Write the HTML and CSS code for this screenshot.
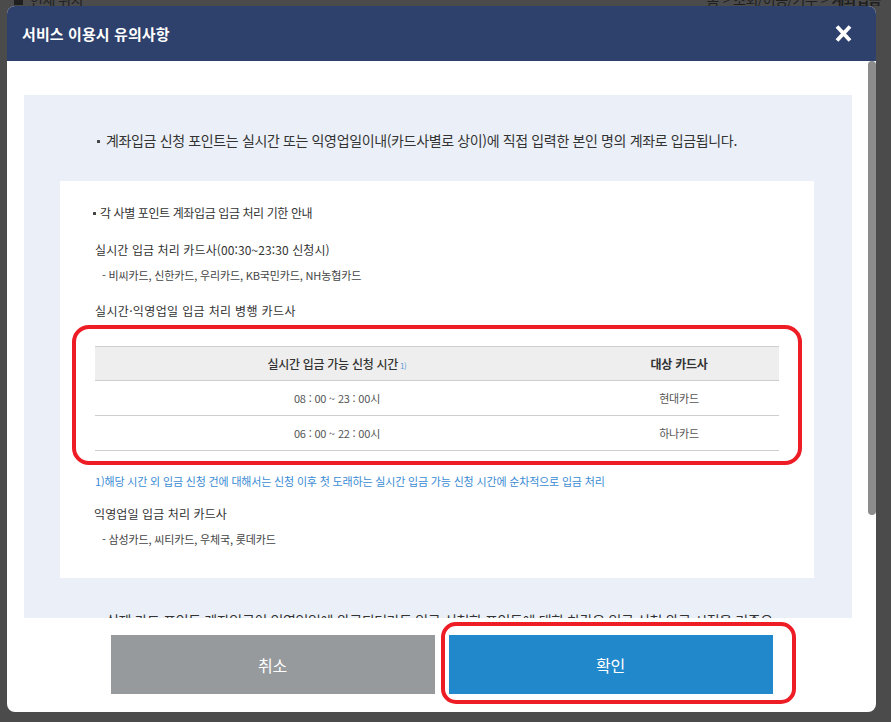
FILE: index.html
```html
<!DOCTYPE html>
<html lang="ko">
<head>
<meta charset="utf-8">
<title>서비스 이용시 유의사항</title>
<link rel="stylesheet" href="styles.css">
</head>
<body>
<div class="behind">
  <div class="behind-row">
    <span class="loc"><svg class="home" width="13" height="12" viewBox="0 0 13 12"><path d="M6.5 0 L13 6 L11 6 L11 12 L2 12 L2 6 L0 6 Z" fill="#1f1f1f"/></svg>현재 위치</span>
    <span class="crumb">홈 &gt; 조회/이용/기부 &gt; <b>계좌입금</b></span>
  </div>
</div>

<div class="modal">
  <div class="modal-head">
    <h1 class="modal-title">서비스 이용시 유의사항</h1>
    <button class="close" type="button" aria-label="닫기">
      <svg width="17" height="17" viewBox="0 0 17 17"><path d="M2 1.5 L15 15.5 M15 1.5 L2 15.5" stroke="#fff" stroke-width="3.8" fill="none"/></svg>
    </button>
  </div>

  <div class="modal-body">
    <div class="scroll-view">
      <div class="notice">
        <p class="bullet top-text">계좌입금 신청 포인트는 실시간 또는 익영업일이내(카드사별로 상이)에 직접 입력한 본인 명의 계좌로 입금됩니다.</p>

        <div class="panel">
          <p class="bullet panel-head">각 사별 포인트 계좌입금 입금 처리 기한 안내</p>
          <p class="label l1">실시간 입금 처리 카드사(00:30~23:30 신청시)</p>
          <p class="sub">- 비씨카드, 신한카드, 우리카드, KB국민카드, NH농협카드</p>
          <p class="label l2">실시간·익영업일 입금 처리 병행 카드사</p>

          <div class="table-wrap">
            <table class="time-table">
              <colgroup><col class="c1"><col class="c2"></colgroup>
              <thead>
                <tr><th class="th1">실시간 입금 가능 신청 시간<sup>1)</sup></th><th class="th2">대상 카드사</th></tr>
              </thead>
              <tbody>
                <tr><td>08 : 00 ~ 23 : 00시</td><td>현대카드</td></tr>
                <tr><td>06 : 00 ~ 22 : 00시</td><td>하나카드</td></tr>
              </tbody>
            </table>
            <span class="mark mark-table"></span>
          </div>

          <p class="footnote">1)해당 시간 외 입금 신청 건에 대해서는 신청 이후 첫 도래하는 실시간 입금 가능 신청 시간에 순차적으로 입금 처리</p>
          <p class="label l3">익영업일 입금 처리 카드사</p>
          <p class="sub">- 삼성카드, 씨티카드, 우체국, 롯데카드</p>
        </div>

        <p class="bullet next-text">실제 카드 포인트 계좌입금이 익영업일에 완료되더라도 입금 신청한 포인트에 대한 차감은 입금 신청 완료 시점을 기준으로 합니다.</p>
        <p class="bullet last-text">계좌입금 신청 완료 후에는 신청 취소가 불가합니다.</p>
      </div>
    </div>
    <div class="scrollbar"><div class="scroll-thumb"></div></div>
  </div>

  <div class="modal-foot">
    <button class="btn btn-cancel" type="button">취소</button>
    <div class="confirm-wrap">
      <button class="btn btn-ok" type="button">확인</button>
      <span class="mark mark-btn"></span>
    </div>
  </div>
</div>
</body>
</html>
```

FILE: styles.css
```css
* { box-sizing: border-box; }

html, body {
  margin: 0;
  padding: 0;
}

body {
  width: 891px;
  height: 722px;
  overflow: hidden;
  background: #4b4b4b;
  font-family: "Noto Sans CJK KR", "Noto Sans", sans-serif;
  color: #333;
}

p { margin: 0; }

/* page behind the dimmed overlay */
.behind {
  height: 6px;
  overflow: hidden;
}

.behind-row {
  display: flex;
  justify-content: space-between;
  margin-top: -9px;
  height: 16px;
  line-height: 16px;
  font-size: 14px;
  color: #1f1f1f;
  padding: 0 10px 0 12px;
  letter-spacing: -0.5px;
}

.loc {
  display: flex;
  align-items: center;
  gap: 5px;
}

.crumb b { font-weight: 700; }

/* modal */
.modal {
  position: fixed;
  top: 6px;
  left: 7px;
  width: 869px;
  height: 706px;
  background: #fff;
  border-radius: 8px;
  overflow: hidden;
  display: flex;
  flex-direction: column;
}

.modal-head {
  flex: 0 0 55px;
  background: #2e416c;
  display: flex;
  align-items: center;
  justify-content: space-between;
  padding: 0 24px 0 15px;
}

.modal-title {
  margin: 0;
  font-size: 15px;
  font-weight: 700;
  color: #fff;
  letter-spacing: 0.1px;
  line-height: 20px;
}

.close {
  border: 0;
  padding: 0;
  margin: 0;
  background: transparent;
  width: 17px;
  height: 17px;
  display: flex;
}

.modal-body {
  flex: 1 1 auto;
  min-height: 0;
  display: flex;
}

.scroll-view {
  flex: 1 1 auto;
  min-width: 0;
  overflow: hidden;
  padding: 34px 16px 0 17px;
}

.scrollbar {
  flex: 0 0 8px;
  background: #fff;
}

.scroll-thumb {
  height: 454px;
  background: #8c8c8c;
  border-radius: 4px;
}

.notice {
  background: #ebf0f8;
  padding: 35px 38px 35px 36px;
}

.bullet::before {
  content: "";
  display: inline-block;
  width: 3px;
  height: 3px;
  background: #444;
  border-radius: 0.5px;
  vertical-align: middle;
  margin-right: 6px;
  position: relative;
  top: -1px;
}

.top-text,
.next-text,
.last-text {
  margin: 0 37px;
  font-size: 14px;
  line-height: 20px;
  letter-spacing: -0.36px;
  color: #333;
}

.top-text { margin-bottom: 31px; }
.next-text { margin-top: 32px; }
.last-text { margin-top: 10px; }

.panel {
  background: #fff;
  padding: 23px 35px 31px 33px;
}

.panel-head,
.label {
  font-size: 12px;
  line-height: 18px;
  letter-spacing: 0.1px;
  color: #333;
}

.panel-head { letter-spacing: -0.4px; }
.panel-head::before { margin-right: 4px; }

.label { margin-left: 2px; }
.l1 { margin-top: 19px; }
.l2 { margin-top: 19px; letter-spacing: 0.35px; }
.l3 { margin-top: 16px; margin-left: 1px; }

.sub {
  margin-top: 8px;
  padding-left: 9px;
  font-size: 11px;
  line-height: 16px;
  letter-spacing: -0.15px;
  color: #444;
}

.table-wrap {
  position: relative;
  margin: 26px 0 0 2px;
}

.time-table {
  width: 684px;
  border-collapse: separate;
  border-spacing: 0;
  table-layout: fixed;
}

.c1 { width: 484px; }
.c2 { width: 200px; }

.time-table th,
.time-table td {
  padding: 0;
  line-height: 34px;
  text-align: center;
  border-bottom: 1px solid #cfcfcf;
}

.time-table th {
  background: #eeeeee;
  border-top: 1px solid #cfcfcf;
  line-height: 33px;
  font-size: 12px;
  color: #333;
  letter-spacing: -0.3px;
}

.th1 { font-weight: 500; }
.th2 { font-weight: 700; }

.time-table sup {
  font-size: 8px;
  line-height: 0;
  color: #5b9ad6;
  font-weight: 400;
  vertical-align: 0;
  margin-left: 2px;
}

.time-table td {
  font-size: 11px;
  color: #555;
  letter-spacing: -0.2px;
}

.footnote {
  margin: 22px 0 0 2px;
  font-size: 11px;
  line-height: 16px;
  letter-spacing: -0.17px;
  color: #3a8bd4;
}

/* red annotation outlines */
.mark {
  position: absolute;
  border: 4px solid #ee1c25;
  border-radius: 17px;
  pointer-events: none;
}

.mark-table {
  left: -23px;
  right: -23px;
  top: -21px;
  bottom: -14px;
}

/* footer */
.modal-foot {
  flex: 0 0 94px;
  display: flex;
  justify-content: center;
  gap: 14px;
  padding: 17px 0 18px;
}

.btn {
  width: 324px;
  height: 59px;
  border: 0;
  margin: 0;
  padding: 0;
  font-family: inherit;
  font-size: 16px;
  color: #fff;
  letter-spacing: -0.3px;
}

.btn-cancel { background: #969a9d; }
.btn-ok { background: #2288cc; display: block; }

.confirm-wrap { position: relative; }

.mark-btn {
  left: -8px;
  right: -23px;
  top: -13px;
  bottom: -10px;
  border-radius: 15px;
}
```
